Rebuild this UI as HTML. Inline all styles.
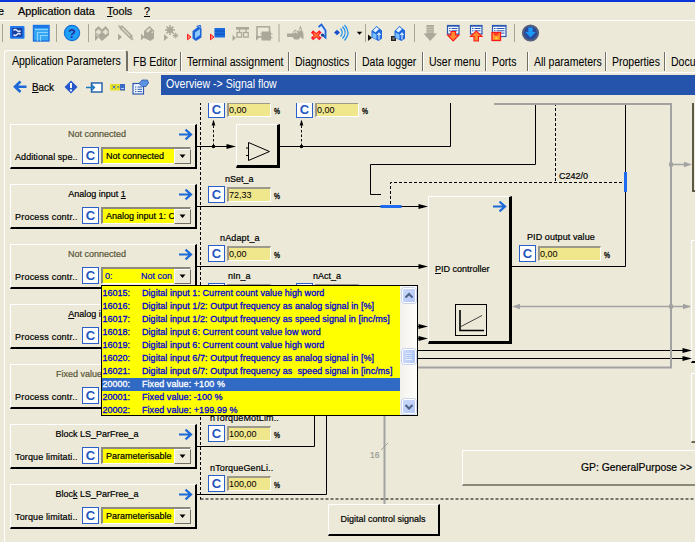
<!DOCTYPE html>
<html><head><meta charset="utf-8"><title>Signal flow</title><style>
html,body{margin:0;padding:0;background:#ECE9D8}
#root{position:relative;width:695px;height:542px;overflow:hidden;background:#ECE9D8;font-family:"Liberation Sans",sans-serif}
.t{position:absolute;white-space:pre;line-height:1.2;font-family:"Liberation Sans",sans-serif;-webkit-text-stroke:0.2px}
.rb{position:absolute;background:#ECE9D8;border-style:solid;border-color:#fff #000 #000 #fff;border-top-width:1px;border-left-width:1px}
.cb{position:absolute;width:15px;height:15px;border:1px solid #2A5FC8;background:#fff;color:#1F55C0;font-weight:bold;font-size:13px;line-height:15px;text-align:center;font-family:"Liberation Sans",sans-serif}
.fd{position:absolute;height:12px;background:#F0E68C;border-top:2px solid #9D9A8A;border-left:2px solid #9D9A8A;border-bottom:1px solid #fff;border-right:1px solid #fff;font-size:9px;line-height:12px;padding-left:0px;box-sizing:content-box;white-space:pre;overflow:hidden}
.dd{position:absolute;width:90px;height:17px;box-sizing:border-box;border-top:2px solid #8C8A7C;border-left:2px solid #8C8A7C;border-bottom:1px solid #fff;border-right:1px solid #fff;background:#ECE9D8}
.ddy{position:absolute;left:0;top:0;width:71px;height:14px;background:#FFFF00}
.ddb{position:absolute;left:71px;top:0;width:15px;height:13px;background:#ECE9D8;border:1px solid;border-color:#fff #716F64 #716F64 #fff;box-sizing:content-box}
svg{position:absolute;left:0;top:0}
</style></head>
<body><div id="root">
<div style="position:absolute;left:0;top:0;width:695px;height:2px;background:#0A35D8"></div>
<div style="position:absolute;left:0;top:20px;width:695px;height:1px;background:#fff"></div>
<div class="t " style="left:-2px;top:5px;font-size:10.8px;color:#000;">e</div>
<div class="t " style="left:18px;top:5px;font-size:10.8px;color:#000;">Application data</div>
<div class="t " style="left:107px;top:5px;font-size:10.8px;color:#000;"><u>T</u>ools</div>
<div class="t " style="left:144px;top:5px;font-size:10.8px;color:#000;"><u>?</u></div>
<div style="position:absolute;left:4px;top:50px;width:124px;height:21px;border:1px solid #fff;border-right:2px solid #716F64;border-bottom:none;border-radius:3px 3px 0 0;box-sizing:border-box;background:#ECE9D8"></div>
<div class="t " style="left:12px;top:54px;font-size:12px;color:#000;-webkit-text-stroke:0.05px;transform:scaleX(0.876);transform-origin:0 0;">Application Parameters</div>
<div class="t " style="left:133px;top:55px;font-size:12px;color:#000;-webkit-text-stroke:0.05px;transform:scaleX(0.876);transform-origin:0 0;">FB Editor</div>
<div class="t " style="left:187px;top:55px;font-size:12px;color:#000;-webkit-text-stroke:0.05px;transform:scaleX(0.876);transform-origin:0 0;">Terminal assignment</div>
<div class="t " style="left:295px;top:55px;font-size:12px;color:#000;-webkit-text-stroke:0.05px;transform:scaleX(0.876);transform-origin:0 0;">Diagnostics</div>
<div class="t " style="left:362px;top:55px;font-size:12px;color:#000;-webkit-text-stroke:0.05px;transform:scaleX(0.876);transform-origin:0 0;">Data logger</div>
<div class="t " style="left:429px;top:55px;font-size:12px;color:#000;-webkit-text-stroke:0.05px;transform:scaleX(0.876);transform-origin:0 0;">User menu</div>
<div class="t " style="left:492px;top:55px;font-size:12px;color:#000;-webkit-text-stroke:0.05px;transform:scaleX(0.876);transform-origin:0 0;">Ports</div>
<div class="t " style="left:534px;top:55px;font-size:12px;color:#000;-webkit-text-stroke:0.05px;transform:scaleX(0.876);transform-origin:0 0;">All parameters</div>
<div class="t " style="left:612px;top:55px;font-size:12px;color:#000;-webkit-text-stroke:0.05px;transform:scaleX(0.876);transform-origin:0 0;">Properties</div>
<div class="t " style="left:671px;top:55px;font-size:12px;color:#000;-webkit-text-stroke:0.05px;transform:scaleX(0.876);transform-origin:0 0;">Docu</div>
<div style="position:absolute;left:180px;top:52px;width:1px;height:19px;background:#716F64"></div>
<div style="position:absolute;left:181px;top:52px;width:1px;height:19px;background:#fff"></div>
<div style="position:absolute;left:288px;top:52px;width:1px;height:19px;background:#716F64"></div>
<div style="position:absolute;left:289px;top:52px;width:1px;height:19px;background:#fff"></div>
<div style="position:absolute;left:355px;top:52px;width:1px;height:19px;background:#716F64"></div>
<div style="position:absolute;left:356px;top:52px;width:1px;height:19px;background:#fff"></div>
<div style="position:absolute;left:422px;top:52px;width:1px;height:19px;background:#716F64"></div>
<div style="position:absolute;left:423px;top:52px;width:1px;height:19px;background:#fff"></div>
<div style="position:absolute;left:485px;top:52px;width:1px;height:19px;background:#716F64"></div>
<div style="position:absolute;left:486px;top:52px;width:1px;height:19px;background:#fff"></div>
<div style="position:absolute;left:527px;top:52px;width:1px;height:19px;background:#716F64"></div>
<div style="position:absolute;left:528px;top:52px;width:1px;height:19px;background:#fff"></div>
<div style="position:absolute;left:605px;top:52px;width:1px;height:19px;background:#716F64"></div>
<div style="position:absolute;left:606px;top:52px;width:1px;height:19px;background:#fff"></div>
<div style="position:absolute;left:664px;top:52px;width:1px;height:19px;background:#716F64"></div>
<div style="position:absolute;left:665px;top:52px;width:1px;height:19px;background:#fff"></div>
<div style="position:absolute;left:128px;top:72px;width:567px;height:1px;background:#fff"></div>
<div style="position:absolute;left:4px;top:71px;width:1px;height:471px;background:#fff"></div>
<div class="t " style="left:32px;top:80.5px;font-size:11px;color:#000;transform:scaleX(0.9);transform-origin:0 0;"><u>B</u>ack</div>
<div style="position:absolute;left:161px;top:75px;width:534px;height:20px;background:#2554AC"></div>
<div class="t " style="left:165.5px;top:77px;font-size:12px;color:#fff;-webkit-text-stroke:0;transform:scaleX(0.881);transform-origin:0 0;">Overview -&gt; Signal flow</div>
<div class="rb" style="left:10px;top:124px;width:184px;height:42px;border-right-width:2px;border-bottom-width:2px;box-sizing:content-box;"></div>
<div class="t" style="left:10px;top:129px;width:174px;text-align:center;font-size:9px;color:#5A5536">Not connected</div>
<div class="t " style="left:15px;top:151.5px;font-size:9px;color:#000;letter-spacing:0.07px;">Additional spe..</div>
<div class="cb" style="left:82px;top:147px">C</div>
<div class="dd" style="left:101px;top:147px"><div class="ddy"></div><div class="ddb"></div></div>
<div class="t " style="left:106px;top:151px;font-size:9px;color:#000;width:68px;overflow:hidden">Not connected</div>
<div class="rb" style="left:10px;top:184px;width:184px;height:42px;border-right-width:2px;border-bottom-width:2px;box-sizing:content-box;"></div>
<div class="t" style="left:10px;top:189px;width:174px;text-align:center;font-size:9px;color:#000">Analog input <u>1</u></div>
<div class="t " style="left:15px;top:211.5px;font-size:9px;color:#000;letter-spacing:0.21px;">Process contr..</div>
<div class="cb" style="left:82px;top:207px">C</div>
<div class="dd" style="left:101px;top:207px"><div class="ddy"></div><div class="ddb"></div></div>
<div class="t " style="left:106px;top:211px;font-size:9px;color:#000;width:68px;overflow:hidden">Analog input 1: C</div>
<div class="rb" style="left:10px;top:244px;width:184px;height:42px;border-right-width:2px;border-bottom-width:2px;box-sizing:content-box;"></div>
<div class="t" style="left:10px;top:249px;width:174px;text-align:center;font-size:9px;color:#5A5536">Not connected</div>
<div class="t " style="left:15px;top:271.5px;font-size:9px;color:#000;letter-spacing:0.21px;">Process contr..</div>
<div class="cb" style="left:82px;top:267px">C</div>
<div class="dd" style="left:101px;top:267px"><div class="ddy"></div><div class="ddb"></div></div>
<div class="t " style="left:105px;top:271px;font-size:9px;color:#0000D0;">0:</div>
<div class="t " style="left:141px;top:271px;font-size:9px;color:#0000D0;">Not con</div>
<div class="rb" style="left:10px;top:304px;width:184px;height:42px;border-right-width:2px;border-bottom-width:2px;box-sizing:content-box;"></div>
<div class="t" style="left:10px;top:309px;width:174px;text-align:center;font-size:9px;color:#000"><u>A</u>nalog input 2</div>
<div class="t " style="left:15px;top:331.5px;font-size:9px;color:#000;letter-spacing:0.21px;">Process contr..</div>
<div class="cb" style="left:82px;top:327px">C</div>
<div class="dd" style="left:101px;top:327px"><div class="ddy"></div><div class="ddb"></div></div>
<div class="rb" style="left:10px;top:364px;width:184px;height:42px;border-right-width:2px;border-bottom-width:2px;box-sizing:content-box;"></div>
<div class="t" style="left:10px;top:369px;width:174px;text-align:center;font-size:9px;color:#5A5536">Fixed value: +100 %</div>
<div class="t " style="left:15px;top:391.5px;font-size:9px;color:#000;letter-spacing:0.21px;">Process contr..</div>
<div class="cb" style="left:82px;top:387px">C</div>
<div class="dd" style="left:101px;top:387px"><div class="ddy"></div><div class="ddb"></div></div>
<div class="rb" style="left:10px;top:424px;width:184px;height:42px;border-right-width:2px;border-bottom-width:2px;box-sizing:content-box;"></div>
<div class="t" style="left:10px;top:429px;width:174px;text-align:center;font-size:9px;color:#000">Block LS_ParFree_a</div>
<div class="t " style="left:15px;top:451.5px;font-size:9px;color:#000;letter-spacing:0.13px;">Torque limitati..</div>
<div class="cb" style="left:82px;top:447px">C</div>
<div class="dd" style="left:101px;top:447px"><div class="ddy"></div><div class="ddb"></div></div>
<div class="t " style="left:106px;top:451px;font-size:9px;color:#000;width:68px;overflow:hidden">Parameterisable</div>
<div class="rb" style="left:10px;top:484px;width:184px;height:42px;border-right-width:2px;border-bottom-width:2px;box-sizing:content-box;"></div>
<div class="t" style="left:10px;top:489px;width:174px;text-align:center;font-size:9px;color:#000">Bloc<u>k</u> LS_ParFree_a</div>
<div class="t " style="left:15px;top:511.5px;font-size:9px;color:#000;letter-spacing:0.13px;">Torque limitati..</div>
<div class="cb" style="left:82px;top:507px">C</div>
<div class="dd" style="left:101px;top:507px"><div class="ddy"></div><div class="ddb"></div></div>
<div class="t " style="left:106px;top:511px;font-size:9px;color:#000;width:68px;overflow:hidden">Parameterisable</div>
<div class="t " style="left:370px;top:450px;font-size:8.5px;color:#9A9A9A;">16</div>
<div class="rb" style="left:236px;top:124px;width:40px;height:40px;border-right-width:3px;border-bottom-width:3px;box-sizing:content-box;"></div>
<div class="cb" style="left:208px;top:101px">C</div>
<div class="fd" style="left:227px;top:102px;width:41px">0,00</div>
<div class="t" style="left:274px;top:105.5px;font-size:9px;transform:scaleX(0.75);transform-origin:0 0;-webkit-text-stroke:0.35px">%</div>
<div class="cb" style="left:296px;top:101px">C</div>
<div class="fd" style="left:315px;top:102px;width:41px">0,00</div>
<div class="t" style="left:362px;top:105.5px;font-size:9px;transform:scaleX(0.75);transform-origin:0 0;-webkit-text-stroke:0.35px">%</div>
<div class="t " style="left:225px;top:174px;font-size:9px;color:#000;">nSet_a</div>
<div class="cb" style="left:208px;top:186px">C</div>
<div class="fd" style="left:227px;top:187px;width:41px">72,33</div>
<div class="t" style="left:274px;top:190.5px;font-size:9px;transform:scaleX(0.75);transform-origin:0 0;-webkit-text-stroke:0.35px">%</div>
<div class="t " style="left:220px;top:233px;font-size:9px;color:#000;letter-spacing:0.15px;">nAdapt_a</div>
<div class="cb" style="left:208px;top:245px">C</div>
<div class="fd" style="left:227px;top:246px;width:41px">0,00</div>
<div class="t" style="left:274px;top:249.5px;font-size:9px;transform:scaleX(0.75);transform-origin:0 0;-webkit-text-stroke:0.35px">%</div>
<div class="t " style="left:228px;top:271px;font-size:9px;color:#000;">nIn_a</div>
<div class="t " style="left:313px;top:271px;font-size:9px;color:#000;">nAct_a</div>
<div class="cb" style="left:208px;top:283px">C</div>
<div class="fd" style="left:227px;top:284px;width:41px">0,00</div>
<div class="t" style="left:274px;top:287.5px;font-size:9px;transform:scaleX(0.75);transform-origin:0 0;-webkit-text-stroke:0.35px">%</div>
<div class="cb" style="left:296px;top:283px">C</div>
<div class="fd" style="left:315px;top:284px;width:41px">0,00</div>
<div class="t" style="left:362px;top:287.5px;font-size:9px;transform:scaleX(0.75);transform-origin:0 0;-webkit-text-stroke:0.35px">%</div>
<div class="t " style="left:210px;top:413px;font-size:9px;color:#000;letter-spacing:0.13px;">nTorqueMotLim..</div>
<div class="cb" style="left:208px;top:425px">C</div>
<div class="fd" style="left:227px;top:426px;width:41px">100,00</div>
<div class="t" style="left:274px;top:429.5px;font-size:9px;transform:scaleX(0.75);transform-origin:0 0;-webkit-text-stroke:0.35px">%</div>
<div class="t " style="left:210px;top:463px;font-size:9px;color:#000;letter-spacing:0.13px;">nTorqueGenLi..</div>
<div class="cb" style="left:208px;top:475px">C</div>
<div class="fd" style="left:227px;top:476px;width:41px">100,00</div>
<div class="t" style="left:274px;top:479.5px;font-size:9px;transform:scaleX(0.75);transform-origin:0 0;-webkit-text-stroke:0.35px">%</div>
<div class="rb" style="left:428px;top:196px;width:80px;height:144px;border-right-width:3px;border-bottom-width:3px;box-sizing:content-box;"></div>
<div class="t " style="left:435px;top:264px;font-size:9px;color:#000;"><u>P</u>ID controller</div>
<div style="position:absolute;left:455px;top:304px;width:30px;height:30px;border:1px solid #000;box-sizing:content-box"></div>
<div class="t " style="left:527px;top:232px;font-size:9px;color:#000;letter-spacing:0.08px;">PID output value</div>
<div class="cb" style="left:519px;top:245px">C</div>
<div class="fd" style="left:538px;top:246px;width:60px">0,00</div>
<div class="t" style="left:604px;top:249.5px;font-size:9px;transform:scaleX(0.75);transform-origin:0 0;-webkit-text-stroke:0.35px">%</div>
<div class="t " style="left:559px;top:171px;font-size:9px;color:#000;">C242/0</div>
<div style="position:absolute;left:692px;top:103px;width:10px;height:87px;border:2px solid #5C5844;border-top:none;box-sizing:content-box"></div>
<div class="rb" style="left:691px;top:240px;width:17px;height:120px;border-right-width:2px;border-bottom-width:2px;box-sizing:content-box;"></div>
<div class="rb" style="left:691px;top:373px;width:20px;height:67px;border-bottom-width:2px;border-bottom-color:#6A6756"></div>
<div style="position:absolute;left:462px;top:450px;width:240px;height:33px;border:1px solid;border-color:#fff #8A8878 #8A8878 #fff;border-bottom-width:2px;box-sizing:content-box"></div>
<div class="t " style="left:580.5px;top:461px;font-size:11.5px;color:#000;transform:scaleX(0.9);transform-origin:0 0;">GP: GeneralPurpose &gt;&gt;</div>
<div class="rb" style="left:328px;top:504px;width:109px;height:29px;border-right-width:2px;border-bottom-width:2px;box-sizing:content-box;"></div>
<div class="t" style="left:328px;top:514px;width:110px;text-align:center;font-size:9px">Digital control signals</div>
<svg width="695" height="542" viewBox="0 0 695 542">
<path d="M179 134.5H190.5M185.5 129.7L191 134.5L185.5 139.3" stroke="#1C6AD8" stroke-width="2.2" fill="none"/>
<path d="M179.5 154.5h6l-3 3.5z" fill="#000"/>
<path d="M179 194.5H190.5M185.5 189.7L191 194.5L185.5 199.3" stroke="#1C6AD8" stroke-width="2.2" fill="none"/>
<path d="M179.5 214.5h6l-3 3.5z" fill="#000"/>
<path d="M179 254.5H190.5M185.5 249.7L191 254.5L185.5 259.3" stroke="#1C6AD8" stroke-width="2.2" fill="none"/>
<path d="M179.5 274.5h6l-3 3.5z" fill="#000"/>
<path d="M179 314.5H190.5M185.5 309.7L191 314.5L185.5 319.3" stroke="#1C6AD8" stroke-width="2.2" fill="none"/>
<path d="M179.5 334.5h6l-3 3.5z" fill="#000"/>
<path d="M179 374.5H190.5M185.5 369.7L191 374.5L185.5 379.3" stroke="#1C6AD8" stroke-width="2.2" fill="none"/>
<path d="M179.5 394.5h6l-3 3.5z" fill="#000"/>
<path d="M179 434.5H190.5M185.5 429.7L191 434.5L185.5 439.3" stroke="#1C6AD8" stroke-width="2.2" fill="none"/>
<path d="M179.5 454.5h6l-3 3.5z" fill="#000"/>
<path d="M179 494.5H190.5M185.5 489.7L191 494.5L185.5 499.3" stroke="#1C6AD8" stroke-width="2.2" fill="none"/>
<path d="M179.5 514.5h6l-3 3.5z" fill="#000"/>
<path d="M197 146.5 L228 146.5" stroke="#000" stroke-width="1" fill="none" />
<path d="M236 146.5L226.5 143.9L226.5 149.1Z" fill="#000"/>
<path d="M280 146.5 L450.5 146.5 L450.5 103" stroke="#000" stroke-width="1" fill="none" />
<circle cx="213.5" cy="146.5" r="1.8" fill="#000"/>
<path d="M213.5 146 L213.5 125" stroke="#000" stroke-width="1" fill="none" stroke-dasharray="2.5 2" />
<path d="M213.5 119.5L211.7 125.5L215.3 125.5Z" fill="#000"/>
<circle cx="301.5" cy="146.5" r="1.8" fill="#000"/>
<path d="M301.5 146 L301.5 125" stroke="#000" stroke-width="1" fill="none" stroke-dasharray="2.5 2" />
<path d="M301.5 119.5L299.7 125.5L303.3 125.5Z" fill="#000"/>
<path d="M381 194.5 L370.5 194.5 L370.5 164.5 L535.5 164.5 L535.5 103" stroke="#000" stroke-width="1" fill="none" />
<path d="M390.5 204 L390.5 182.5 L625 182.5" stroke="#000" stroke-width="1" fill="none" stroke-dasharray="3 2" />
<path d="M555.5 103 L555.5 182" stroke="#000" stroke-width="1" fill="none" stroke-dasharray="3 2" />
<path d="M625.5 103 L625.5 266.5 L512 266.5" stroke="#000" stroke-width="1" fill="none" />
<rect x="624" y="172" width="3" height="20" fill="#1E6BF0"/>
<path d="M197 206.5 L420 206.5" stroke="#000" stroke-width="1" fill="none" />
<path d="M428 206.5L418.5 203.9L418.5 209.1Z" fill="#000"/>
<rect x="380.5" y="205" width="21" height="3" fill="#1E6BF0"/>
<path d="M197 266.5 L420 266.5" stroke="#000" stroke-width="1" fill="none" />
<path d="M428 266.5L418.5 263.9L418.5 269.1Z" fill="#000"/>
<path d="M197 326.5 L420 326.5" stroke="#000" stroke-width="1" fill="none" />
<path d="M428 326.5L418.5 323.9L418.5 329.1Z" fill="#000"/>
<path d="M197 386.5 L215 386.5" stroke="#000" stroke-width="1" fill="none" />
<path d="M410 338.5 L420 338.5" stroke="#000" stroke-width="1" fill="none" />
<path d="M428 338.5L418.5 335.9L418.5 341.1Z" fill="#000"/>
<path d="M410 350.5 L684 350.5" stroke="#000" stroke-width="1" fill="none" />
<path d="M692 350.5L682.5 347.9L682.5 353.1Z" fill="#000"/>
<path d="M410 358.5 L684 358.5" stroke="#000" stroke-width="1" fill="none" />
<path d="M692 358.5L682.5 355.9L682.5 361.1Z" fill="#000"/>
<path d="M494 104 L671 104 L671 367.5 L410 367.5" stroke="#A2A2A2" stroke-width="2" fill="none" />
<path d="M671 164.5 L684 164.5" stroke="#A2A2A2" stroke-width="1.5" fill="none" />
<path d="M692 164.5L684 161.7L684 167.3Z" fill="#A2A2A2"/>
<rect x="669" y="162.5" width="4" height="4" fill="#A2A2A2"/>
<path d="M519 306.5 L684 306.5" stroke="#A2A2A2" stroke-width="1.5" fill="none" />
<path d="M512 306.5L520 303.7L520 309.3Z" fill="#A2A2A2"/>
<path d="M684 306.5 L690 306.5" stroke="#A2A2A2" stroke-width="1.5" fill="none" />
<path d="M691 306.5L683 303.7L683 309.3Z" fill="#A2A2A2"/>
<rect x="669" y="304.5" width="4" height="4" fill="#A2A2A2"/>
<path d="M197 446.5 L314.5 446.5 L314.5 410" stroke="#000" stroke-width="1" fill="none" />
<path d="M197 494.5 L326.5 494.5 L326.5 410" stroke="#000" stroke-width="1" fill="none" />
<path d="M384.5 410 L384.5 504" stroke="#A2A2A2" stroke-width="2" fill="none" />
<path d="M381 450 L388 443" stroke="#A2A2A2" stroke-width="1" fill="none" />
<path d="M200.5 97 L200.5 499.5" stroke="#000" stroke-width="1" fill="none" stroke-dasharray="3 2" />
<path d="M200.5 499 L695 499" stroke="#000" stroke-width="1" fill="none" stroke-dasharray="3 2" />
<path d="M248.5 142.5V160.5L269.5 151.5Z M246 148h2.500 M246 155.500h2.500" stroke="#000" stroke-width="1" fill="none"/>
<path d="M493 206.5H504.5M499.5 201.7L505 206.5L499.5 211.3" stroke="#1C6AD8" stroke-width="2.2" fill="none"/>
<path d="M460 310V330.5H484" stroke="#000" stroke-width="1.6" fill="none"/><path d="M461 326.5L482 315.5" stroke="#444" stroke-width="1" fill="none"/>
<path d="M2.5 24V42" stroke="#A9A697" stroke-width="1"/>
<path d="M56.5 24V42" stroke="#A9A697" stroke-width="1"/>
<path d="M88.5 24V42" stroke="#A9A697" stroke-width="1"/>
<path d="M279 24V42" stroke="#A9A697" stroke-width="1"/>
<path d="M365.5 24V42" stroke="#A9A697" stroke-width="1"/>
<path d="M414.5 24V42" stroke="#A9A697" stroke-width="1"/>
<path d="M514.5 24V42" stroke="#A9A697" stroke-width="1"/>
<rect x="10" y="26" width="14.500" height="12.800" rx="1" fill="#1C78EC"/><rect x="12.200" y="28" width="10.200" height="8.800" fill="#1A3FA0"/>
<path d="M13.5 30.5q1.5-2 3.5 0t3.5 0M13.5 34.5q1.5 2 3.5 0t3.5 0" stroke="#DCE8FF" stroke-width="1.5" fill="none"/>
<rect x="33.5" y="25.5" width="15.5" height="15.5" fill="#38A8F4" stroke="#1C70E0" stroke-width="1.4"/>
<path d="M35 29.5H48M37.5 41V32.5H48M40.5 41V35.5H48" stroke="#8CD4FF" stroke-width="1.1" fill="none"/>
<rect x="33.5" y="25.5" width="15.5" height="2.5" fill="#1C78E8"/>
<circle cx="72" cy="33" r="7.6" fill="#1CA0F8" stroke="#1870D8" stroke-width="1.2"/>
<text x="72" y="37.6" font-family="Liberation Sans,sans-serif" font-weight="bold" font-size="13" fill="#2C2C9C" text-anchor="middle">?</text>
<path d="M95 33v8l4-4zM98.5 26l3.5 3.5 3.5-3.5 3.5 4v5l-7 6-3.5-3.5-3.5-4v-4z" fill="#ACA899"/>
<path d="M98.5 29l3 3-3 3-3-3zM105.5 29l3 3-3 3-3-3z" fill="#E4E1D2"/>
<path d="M118 33.5v7l4-3.5z" fill="#ACA899"/><path d="M120.5 26.5l11 11" stroke="#ACA899" stroke-width="4"/><path d="M121.5 27.5l8.5 8.5" stroke="#DDD9CA" stroke-width="1.2"/><path d="M130 39l3.5 1.5-1-3.5z" fill="#ACA899"/><path d="M118.5 25.5l3 3" stroke="#ACA899" stroke-width="1.2"/>
<path d="M141 33.5v7l3.5-3.5z" fill="#ACA899"/><path d="M144 31l5.5-5 4.5 4.5v8l-3.500 2.500-6.500-3z" fill="#ACA899"/><path d="M146 31l3.500-3 1.500 1.500-3.500 3.200z" fill="#E4E1D2"/><path d="M151 32.5l2-1.500v2z" fill="#E4E1D2"/>
<path d="M164 34v7l4-3.500z" fill="#ACA899"/><circle cx="170" cy="30" r="3" fill="#ACA899"/><path d="M170 25v10M165 30h10M166.500 26.500l7 7M173.500 26.500l-7 7" stroke="#ACA899" stroke-width="1.500"/><circle cx="175.500" cy="35.500" r="1.600" fill="none" stroke="#ACA899" stroke-width="1"/><path d="M175.500 32.500v6M172.500 35.500h6M173.400 33.400l4.200 4.200M177.600 33.400l-4.200 4.200" stroke="#ACA899" stroke-width="0.800"/>
<path d="M187.500 34.200v5.600l3.500-2.800z" fill="#FF8A70" stroke="#FF1A1A" stroke-width="1"/>
<path d="M192.500 31l6-4.500 3 2v9l-5.500 3.500-3.500-2.500z" fill="#1C64D8"/><path d="M195 32.500l5-3.500v6l-5 3.500z" fill="#8CC8FF"/><path d="M196.500 26.500l3.500-1 1 2" stroke="#1C64D8" stroke-width="1.200" fill="none"/>
<path d="M210.500 34.200v5.600l3.500-2.800z" fill="#FF8A70" stroke="#FF1A1A" stroke-width="1"/>
<rect x="214.500" y="28" width="10.500" height="9.500" fill="#1C6CE0"/><path d="M214.500 31h10.500M214.500 34.200h10.500" stroke="#124CB0" stroke-width="0.900"/>
<path d="M232.500 35v6l3.500-3z" fill="#ACA899"/><rect x="236" y="27" width="13" height="2.600" fill="#ACA899"/><path d="M239.500 29v3M246 29v3" stroke="#ACA899" stroke-width="1.300"/><rect x="237" y="32.500" width="4.600" height="4.600" fill="none" stroke="#ACA899" stroke-width="1.300"/><rect x="243.600" y="32.500" width="4.600" height="4.600" fill="none" stroke="#ACA899" stroke-width="1.300"/>
<path d="M256 34.500v6l3.500-3z" fill="#ACA899"/><rect x="257" y="26.800" width="12.500" height="10" fill="none" stroke="#ACA899" stroke-width="1.500"/><rect x="261.500" y="31.500" width="9.500" height="9" fill="#ACA899"/><path d="M260.500 34h12M260.500 37.500h12" stroke="#ACA899" stroke-width="1"/>
<path d="M287 33.500h5l3-4 3 2 2.500-6 3 8.500v5.500l-3-2.500-2 2.500h-4l-2-2.500h-5.500z" fill="#ACA899"/><path d="M293.500 33l2.500-1.500 1.500 2M299 31l2-2" stroke="#E4E1D2" stroke-width="1.100" fill="none"/>
<path d="M318.500 27l3-2.500 4 6v7l-3-2.500" stroke="#1C64D8" stroke-width="1.800" fill="#DDEBFF"/>
<path d="M312 31.500l8.500 7.500M320.500 31.500l-8.500 7.500" stroke="#FF1A2A" stroke-width="3.400"/><path d="M313.500 33l5.500 4.500M319 33l-5.500 4.500" stroke="#FF8030" stroke-width="1.400"/>
<circle cx="322.500" cy="35" r="1.600" fill="#1C3C90"/>
<path d="M334 32.500l3-2.800 3 2.800-3 2.800z" fill="#1C50C8"/>
<path d="M340.500 28.500q3.500 4 0 8M342.500 26.500q5.500 6 0 12M344.500 25q7 7.500 0 15.500" stroke="#1C90F0" stroke-width="1.200" fill="none"/>
<path d="M356.800 31.800h5.400l-2.700 3z" fill="#000"/>
<path d="M368 34.500v6.500l4-3.200z" fill="#111"/>
<path d="M371.5 31l5-5 5.500 4.500v8l-3.500 2.500-7-3.500z" fill="#1C68DC"/>
<path d="M373.0 30.500l3.500-3.500 2.500 2-3.500 3.500z" fill="#E8F4FF"/>
<path d="M372.5 32.500l4 2v5l-4-2z" fill="#7CC0FF"/>
<path d="M379.0 39.500v-6M377.3 35l1.700-2 1.700 2" stroke="#E8F4FF" stroke-width="1.100" fill="none"/>
<rect x="391" y="36" width="5" height="5" fill="#222"/><rect x="392.300" y="37.300" width="2.400" height="2.400" fill="#777"/>
<path d="M394.5 31l5-5 5.500 4.500v8l-3.500 2.500-7-3.500z" fill="#1C68DC"/>
<path d="M396.0 30.500l3.500-3.500 2.500 2-3.500 3.500z" fill="#E8F4FF"/>
<path d="M395.5 32.500l4 2v5l-4-2z" fill="#7CC0FF"/>
<path d="M402.0 39.500v-6M400.3 35l1.700-2 1.700 2" stroke="#E8F4FF" stroke-width="1.100" fill="none"/>
<path d="M426.500 25h7.500v8.500h3l-6.800 7.500-6.700-7.500h3z" fill="#ACA899"/><path d="M426.500 27.300h7.500M426.500 29.700h7.500M426.500 32h7.500" stroke="#D8D4C4" stroke-width="0.800"/>
<rect x="447.5" y="25.5" width="11.5" height="8.5" fill="#F4F8FF" stroke="#2C58B0" stroke-width="1.200"/>
<rect x="447.5" y="25.2" width="11.5" height="1.500" fill="#2C58B0"/>
<path d="M449.0 28.5h1.500M451.5 28.5h6.0" stroke="#2C58B0" stroke-width="1"/>
<path d="M449.0 30.8h1.500M451.5 30.8h6.0" stroke="#2C58B0" stroke-width="1"/>
<path d="M451 31.500h4.500v3.500h3.500l-5.800 6-5.700-6h3.500z" fill="#FF8A30" stroke="#FF1A1A" stroke-width="1.100"/>
<rect x="470.5" y="25.5" width="11.5" height="8.5" fill="#F4F8FF" stroke="#2C58B0" stroke-width="1.200"/>
<rect x="470.5" y="25.2" width="11.5" height="1.500" fill="#2C58B0"/>
<path d="M472.0 28.5h1.500M474.5 28.5h6.0" stroke="#2C58B0" stroke-width="1"/>
<path d="M472.0 30.8h1.500M474.5 30.8h6.0" stroke="#2C58B0" stroke-width="1"/>
<path d="M474 41v-4.500h-3.500l5.800-5.500 5.700 5.500h-3.500v4.500z" fill="#FF8A30" stroke="#FF1A1A" stroke-width="1.100"/>
<rect x="492.5" y="25.5" width="13.5" height="11" fill="#F4F8FF" stroke="#2C58B0" stroke-width="1.200"/>
<rect x="492.5" y="25.2" width="13.5" height="1.500" fill="#2C58B0"/>
<path d="M494.0 28.5h1.500M496.5 28.5h8.0" stroke="#2C58B0" stroke-width="1"/>
<path d="M494.0 30.8h1.500M496.5 30.8h8.0" stroke="#2C58B0" stroke-width="1"/>
<path d="M494.0 33.1h1.500M496.5 33.1h8.0" stroke="#2C58B0" stroke-width="1"/>
<rect x="492" y="32.500" width="8.500" height="8" fill="#FF9A30" stroke="#FF1A1A" stroke-width="1.300"/><rect x="494" y="33" width="4.500" height="2.500" fill="#FF3A2A"/><rect x="495.500" y="37.300" width="1.800" height="1.800" fill="#FFE030"/>
<circle cx="530.500" cy="33" r="7.600" fill="#2A4A9A" stroke="#56607C" stroke-width="2"/>
<path d="M528.300 27.500h4.400v4.500h3l-5.200 5.500-5.200-5.500h3z" fill="#1C98F8"/>
<path d="M26.500 86.700H16.500M20.500 81.500L15 86.700L20.500 92" stroke="#1C6AD8" stroke-width="2.600" fill="none"/>
<path d="M71 80.500l6.500 6.500-6.500 6.500-6.500-6.500z" fill="#2458CC"/><path d="M71 83v5" stroke="#fff" stroke-width="2"/><circle cx="71" cy="90.300" r="1.100" fill="#fff"/>
<rect x="91.500" y="83" width="10.500" height="9" fill="#fff" stroke="#1C5AA8" stroke-width="1.400"/><path d="M86 87.500h8M91.500 84.500l3 3-3 3" stroke="#1C7AC0" stroke-width="1.300" fill="none"/>
<rect x="110" y="84" width="15" height="6.500" fill="#E6E028"/><rect x="120" y="84" width="5" height="6.500" fill="#3A68C8"/><path d="M112.500 85.500l3 3M115.500 85.500l-3 3M117 87h2.500" stroke="#3A68C8" stroke-width="0.900"/><path d="M121 88.500h3" stroke="#D8E4FF" stroke-width="0.800"/>
<rect x="133" y="83.500" width="10.500" height="10.500" fill="#F4F8FF" stroke="#2C58B0" stroke-width="1.200"/><path d="M135 87h1.300M137.500 87h4.500M135 89.300h1.300M137.500 89.300h4.500M135 91.600h1.300M137.500 91.600h4.500" stroke="#2C58B0" stroke-width="1"/><path d="M139 83.500l3-3.500h5.500l1 3-2.500 3.500h-4z" fill="#5A94E0" stroke="#2C58B0" stroke-width="0.800"/>
</svg>
<div style="position:absolute;left:5px;top:95px;width:690px;height:7.7px;background:#ECE9D8"></div>
<div style="position:absolute;left:101px;top:285px;width:317px;height:131px;box-sizing:border-box;border:1px solid #000;background:#FFFF00;overflow:hidden">
<div style="position:absolute;left:0;top:1px;width:298px;height:13px;background:transparent;color:#0000D8;font-size:9px;line-height:13px;white-space:pre;-webkit-text-stroke:0.3px"><span style="position:absolute;left:0.500px">16015:</span><span style="position:absolute;left:40px;letter-spacing:0.06px">Digital input 1: Current count value high word</span></div>
<div style="position:absolute;left:0;top:14px;width:298px;height:13px;background:transparent;color:#0000D8;font-size:9px;line-height:13px;white-space:pre;-webkit-text-stroke:0.3px"><span style="position:absolute;left:0.500px">16016:</span><span style="position:absolute;left:40px;letter-spacing:0.06px">Digital input 1/2: Output frequency as analog signal in [%]</span></div>
<div style="position:absolute;left:0;top:27px;width:298px;height:13px;background:transparent;color:#0000D8;font-size:9px;line-height:13px;white-space:pre;-webkit-text-stroke:0.3px"><span style="position:absolute;left:0.500px">16017:</span><span style="position:absolute;left:40px;letter-spacing:0.06px">Digital input 1/2: Output frequency as speed signal in [inc/ms]</span></div>
<div style="position:absolute;left:0;top:40px;width:298px;height:13px;background:transparent;color:#0000D8;font-size:9px;line-height:13px;white-space:pre;-webkit-text-stroke:0.3px"><span style="position:absolute;left:0.500px">16018:</span><span style="position:absolute;left:40px;letter-spacing:0.06px">Digital input 6: Current count value low word</span></div>
<div style="position:absolute;left:0;top:53px;width:298px;height:13px;background:transparent;color:#0000D8;font-size:9px;line-height:13px;white-space:pre;-webkit-text-stroke:0.3px"><span style="position:absolute;left:0.500px">16019:</span><span style="position:absolute;left:40px;letter-spacing:0.06px">Digital input 6: Current count value high word</span></div>
<div style="position:absolute;left:0;top:66px;width:298px;height:13px;background:transparent;color:#0000D8;font-size:9px;line-height:13px;white-space:pre;-webkit-text-stroke:0.3px"><span style="position:absolute;left:0.500px">16020:</span><span style="position:absolute;left:40px;letter-spacing:0.06px">Digital input 6/7: Output frequency as analog signal in [%]</span></div>
<div style="position:absolute;left:0;top:79px;width:298px;height:13px;background:transparent;color:#0000D8;font-size:9px;line-height:13px;white-space:pre;-webkit-text-stroke:0.3px"><span style="position:absolute;left:0.500px">16021:</span><span style="position:absolute;left:40px;letter-spacing:0.06px">Digital input 6/7: Output frequency as  speed signal in [inc/ms]</span></div>
<div style="position:absolute;left:0;top:92px;width:298px;height:13px;background:#316AC5;color:#fff;font-size:9px;line-height:13px;white-space:pre;-webkit-text-stroke:0.3px"><span style="position:absolute;left:0.500px">20000:</span><span style="position:absolute;left:40px;letter-spacing:0.06px">Fixed value: +100 %</span></div>
<div style="position:absolute;left:0;top:105px;width:298px;height:13px;background:transparent;color:#0000D8;font-size:9px;line-height:13px;white-space:pre;-webkit-text-stroke:0.3px"><span style="position:absolute;left:0.500px">20001:</span><span style="position:absolute;left:40px;letter-spacing:0.06px">Fixed value: -100 %</span></div>
<div style="position:absolute;left:0;top:118px;width:298px;height:13px;background:transparent;color:#0000D8;font-size:9px;line-height:13px;white-space:pre;-webkit-text-stroke:0.3px"><span style="position:absolute;left:0.500px">20002:</span><span style="position:absolute;left:40px;letter-spacing:0.06px">Fixed value: +199.99 %</span></div>
<div style="position:absolute;left:298px;top:0;width:17px;height:129px;background:linear-gradient(90deg,#F3F1EC,#FEFEFB)"></div>
<div style="position:absolute;left:300px;top:2px;width:14px;height:15px;border-radius:2px;background:linear-gradient(135deg,#CAD8FC,#B4C8F6);border:1px solid #fff;box-sizing:border-box;box-shadow:0 0 0 0.5px #9DB2E8"><svg width="14" height="15" style="left:-1px;top:-1px"><path d="M3.5 9.5L7 6L10.5 9.5" stroke="#4D6185" stroke-width="2" fill="none"/></svg></div>
<div style="position:absolute;left:300px;top:113px;width:14px;height:15px;border-radius:2px;background:linear-gradient(135deg,#CAD8FC,#B4C8F6);border:1px solid #fff;box-sizing:border-box;box-shadow:0 0 0 0.5px #9DB2E8"><svg width="14" height="15" style="left:-1px;top:-1px"><path d="M3.5 6L7 9.5L10.5 6" stroke="#4D6185" stroke-width="2" fill="none"/></svg></div>
<div style="position:absolute;left:300px;top:63px;width:14px;height:15px;border-radius:2px;background:linear-gradient(90deg,#CAD8FC,#B4C8F6);border:1px solid #fff;box-sizing:border-box;box-shadow:0 0 0 0.5px #9DB2E8"><svg width="14" height="15" style="left:-1px;top:-1px"><path d="M4 4.5h6M4 6.5h6M4 8.5h6M4 10.5h6" stroke="#EEF4FE" stroke-width="1"/><path d="M4.5 5.2h6M4.5 7.2h6M4.5 9.2h6" stroke="#8CB0F8" stroke-width="0.6"/></svg></div>
</div>
</div></body></html>
